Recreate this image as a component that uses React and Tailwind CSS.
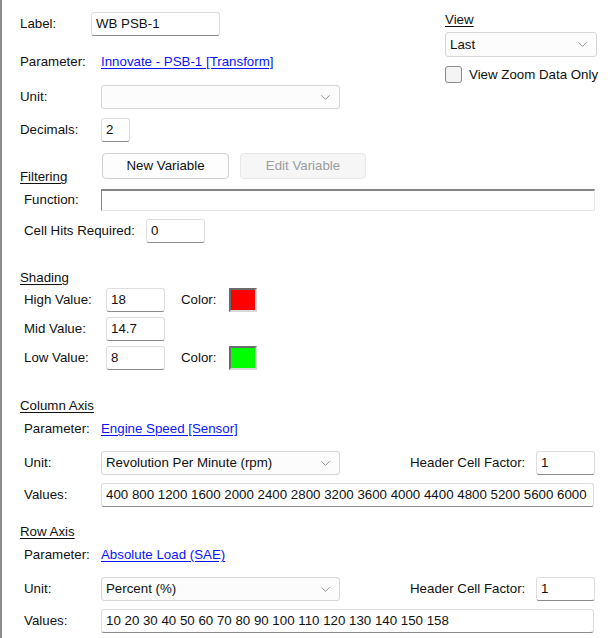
import { ChevronDown } from "lucide-react";

const font = { fontFamily: '"Segoe UI", "Liberation Sans", Arial, sans-serif' };

function TextBox({ value, className = "" }) {
  return (
    <div
      className={`h-[24px] flex items-center px-[4px] bg-white border border-[#dedede] border-b-[#8a8a8a] rounded-[3px] whitespace-nowrap ${className}`}
    >
      {value}
    </div>
  );
}

function Select({ value, className = "" }) {
  return (
    <div
      className={`h-[24px] flex items-center justify-between pl-[4px] pr-[6px] bg-[#fcfcfc] border border-[#d6d6d6] rounded-[3px] ${className}`}
    >
      <span>{value}</span>
      <ChevronDown size={15} strokeWidth={1.1} className="text-[#5c5c5c]" />
    </div>
  );
}

function Link({ children }) {
  return <span className="text-[#0a14ff] underline underline-offset-2">{children}</span>;
}

function Swatch({ color }) {
  return (
    <div
      className="w-[28px] h-[24px] border-2 border-[#6b6b6b] border-r-[#d8d8d8] border-b-[#d8d8d8]"
      style={{ backgroundColor: color }}
    />
  );
}

function AxisSection({ title, param, unit, values, mt }) {
  return (
    <div className={mt}>
      <div className="h-[16px] leading-[16px] underline underline-offset-2">{title}</div>
      <div className="pl-[4px]">
        <div className="flex items-center h-[16px] mt-[7px]">
          <span className="w-[77px]">Parameter:</span>
          <Link>{param}</Link>
        </div>
        <div className="flex items-center mt-[14px]">
          <span className="w-[77px]">Unit:</span>
          <Select value={unit} className="w-[239px]" />
          <span className="ml-[70px] w-[126px]">Header Cell Factor:</span>
          <TextBox value="1" className="w-[59px]" />
        </div>
        <div className="flex items-center mt-[8px]">
          <span className="w-[77px]">Values:</span>
          <TextBox value={values} className="w-[493px]" />
        </div>
      </div>
    </div>
  );
}

export default function App() {
  return (
    <div
      className="w-[608px] h-[638px] overflow-hidden bg-white border-l-2 border-[#8c8c8c] pl-[18px] text-[13.3px] text-[#111]"
      style={font}
    >
      {/* top block */}
      <div className="flex">
        <div className="flex-1">
          <div className="flex items-center mt-[12px]">
            <span className="w-[71px]">Label:</span>
            <TextBox value="WB PSB-1" className="w-[129px]" />
          </div>
          <div className="flex items-center h-[24px] mt-[14px]">
            <span className="w-[81px]">Parameter:</span>
            <Link>Innovate - PSB-1 [Transform]</Link>
          </div>
          <div className="flex items-center mt-[11px]">
            <span className="w-[81px]">Unit:</span>
            <Select value="" className="w-[239px]" />
          </div>
          <div className="flex items-center mt-[9px]">
            <span className="w-[81px]">Decimals:</span>
            <TextBox value="2" className="w-[29px]" />
          </div>
        </div>
        <div className="w-[152px] mr-[11px] shrink-0">
          <div className="h-[16px] leading-[16px] mt-[12px] underline underline-offset-2">View</div>
          <Select value="Last" className="mt-[4px] h-[25px]" />
          <div className="flex items-center gap-[7px] mt-[8px] whitespace-nowrap">
            <div className="w-[17px] h-[17px] shrink-0 rounded-[3px] border border-[#8a8a8a] bg-[#f4f4f4]" />
            <span>View Zoom Data Only</span>
          </div>
        </div>
      </div>

      {/* filtering */}
      <div className="flex h-[32px] mt-[11px]">
        <div className="w-[82px] self-end h-[16px] leading-[16px] underline underline-offset-2">Filtering</div>
        <div className="w-[127px] h-[26px] flex items-center justify-center bg-[#fdfdfd] border border-[#d0d0d0] rounded-[4px]">
          New Variable
        </div>
        <div className="w-[126px] h-[26px] ml-[11px] flex items-center justify-center bg-[#f6f6f6] border border-[#e6e6e6] rounded-[4px] text-[#9d9d9d]">
          Edit Variable
        </div>
      </div>
      <div className="pl-[4px]">
        <div className="flex items-center mt-[4px]">
          <span className="w-[77px]">Function:</span>
          <div className="w-[494px] h-[22px] bg-white border-t-2 border-l border-[#858585] border-r border-b border-r-[#e4e4e4] border-b-[#e4e4e4]" />
        </div>
        <div className="flex items-center mt-[8px]">
          <span className="w-[122px]">Cell Hits Required:</span>
          <TextBox value="0" className="w-[59px]" />
        </div>
      </div>

      {/* shading */}
      <div className="h-[16px] leading-[16px] mt-[27px] underline underline-offset-2">Shading</div>
      <div className="pl-[4px]">
        <div className="flex items-center mt-[2px]">
          <span className="w-[82px]">High Value:</span>
          <TextBox value="18" className="w-[59px]" />
          <span className="ml-[16px] w-[48px]">Color:</span>
          <Swatch color="#ff0000" />
        </div>
        <div className="flex items-center mt-[5px]">
          <span className="w-[82px]">Mid Value:</span>
          <TextBox value="14.7" className="w-[59px]" />
        </div>
        <div className="flex items-center mt-[5px]">
          <span className="w-[82px]">Low Value:</span>
          <TextBox value="8" className="w-[59px]" />
          <span className="ml-[16px] w-[48px]">Color:</span>
          <Swatch color="#00ff00" />
        </div>
      </div>

      <AxisSection
        mt="mt-[28px]"
        title="Column Axis"
        param="Engine Speed [Sensor]"
        unit="Revolution Per Minute (rpm)"
        values="400 800 1200 1600 2000 2400 2800 3200 3600 4000 4400 4800 5200 5600 6000"
      />
      <AxisSection
        mt="mt-[17px]"
        title="Row Axis"
        param="Absolute Load (SAE)"
        unit="Percent (%)"
        values="10 20 30 40 50 60 70 80 90 100 110 120 130 140 150 158"
      />
    </div>
  );
}
